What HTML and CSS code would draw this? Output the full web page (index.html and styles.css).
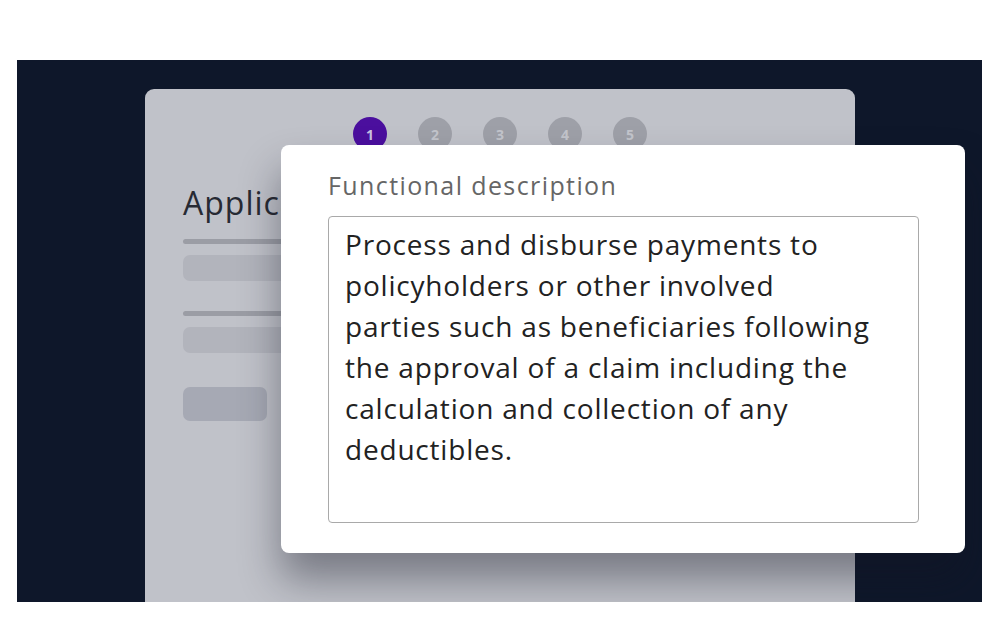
FILE: index.html
```html
<!DOCTYPE html>
<html lang="en">
<head>
  <meta charset="UTF-8">
  <meta name="viewport" content="width=device-width, initial-scale=1.0">
  <title>Functional description</title>
  <link rel="stylesheet" href="styles.css">
</head>
<body>

<div class="frame">

  <div class="card">
    <div class="steps">
      <span class="step active">1</span>
      <span class="step">2</span>
      <span class="step">3</span>
      <span class="step">4</span>
      <span class="step">5</span>
    </div>

    <h1 class="card-title">Application details</h1>

    <div class="field">
      <div class="field-label"></div>
      <div class="field-input"></div>
    </div>
    <div class="field">
      <div class="field-label"></div>
      <div class="field-input"></div>
    </div>

    <div class="card-button"></div>
  </div>

  <div class="modal">
    <label class="modal-label">Functional description</label>
    <div class="textbox">
      Process and disburse payments to<br>
      policyholders or other involved<br>
      parties such as beneficiaries following<br>
      the approval of a claim including the<br>
      calculation and collection of any<br>
      deductibles.
    </div>
  </div>

</div>

</body>
</html>
```

FILE: styles.css
```css
body {
  margin: 0;
  padding: 0;
  background-color: #fff;
  font-family: "Open Sans", "Noto Sans", sans-serif;
}
.frame {
  position: relative;
  margin: 60px 0 0 17px;
  width: 965px;
  height: 542px;
  background-color: #0e172a;
  overflow: hidden;
}
.card {
  margin: 29px 0 0 128px;
  width: 710px;
  height: 560px;
  box-sizing: border-box;
  padding: 28px 38px 0;
  background-color: #c0c2c9;
  border-radius: 9px;
}
.steps {
  display: flex;
  justify-content: center;
  gap: 31px;
}
.step {
  width: 34px;
  height: 34px;
  border-radius: 50%;
  background-color: #9ea0a8;
  color: #c3c5cc;
  font-size: 14px;
  font-weight: 700;
  display: flex;
  align-items: center;
  justify-content: center;
}
.step.active {
  background-color: #4b0f9e;
  color: #c9c3e0;
}
.card-title {
  margin: 32px 0 0;
  font-size: 32px;
  font-weight: 400;
  letter-spacing: 1px;
  color: #272a33;
  line-height: 40px;
}
.field {
  margin-top: 16px;
}
.field + .field {
  margin-top: 30px;
}
.field-label {
  height: 5px;
  width: 300px;
  border-radius: 3px;
  background-color: #9b9da5;
}
.field-input {
  margin-top: 11px;
  height: 26px;
  width: 300px;
  border-radius: 7px;
  background-color: #b2b4bc;
}
.card-button {
  margin-top: 34px;
  width: 84px;
  height: 34px;
  border-radius: 7px;
  background-color: #a6a9b4;
}
.modal {
  position: absolute;
  left: 264px;
  top: 85px;
  width: 684px;
  height: 408px;
  box-sizing: border-box;
  padding: 22px 46px 0 47px;
  background-color: #fff;
  border-radius: 8px;
  box-shadow: 0 26px 40px rgba(20, 22, 35, 0.42);
}
.modal-label {
  display: block;
  font-size: 25px;
  letter-spacing: 1.4px;
  color: #666;
  line-height: 36px;
}
.textbox {
  margin-top: 13px;
  height: 307px;
  box-sizing: border-box;
  padding: 7px 16px;
  border: 1px solid #a9a9a9;
  border-radius: 4px;
  font-size: 28px;
  letter-spacing: 0.8px;
  line-height: 41px;
  color: #222;
}
```
